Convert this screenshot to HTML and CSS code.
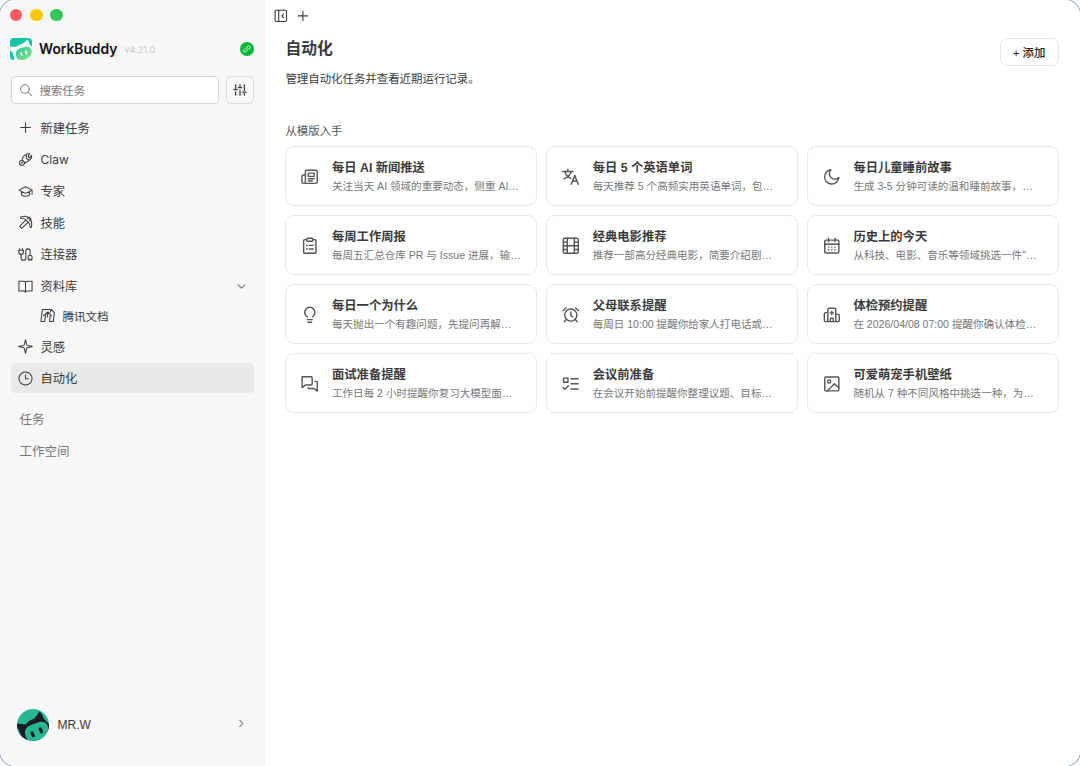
FILE: index.html
```html
<!DOCTYPE html>
<html lang="zh-CN">
<head>
    <meta charset="UTF-8">
    <meta name="viewport" content="width=device-width, initial-scale=1.0">
    <title>WorkBuddy</title>
    <link rel="stylesheet" href="styles.css">
</head>
<body>
<div class="window">
    <aside class="sidebar">
        <div class="lights">
            <span class="light red"></span>
            <span class="light yellow"></span>
            <span class="light green"></span>
        </div>

        <div class="brand">
            <svg class="logo" viewBox="0 0 22 22">
                <defs>
                    <linearGradient id="face" x1="0" y1="0" x2="1" y2="1">
                        <stop offset="0" stop-color="#1fc9a4"/>
                        <stop offset="1" stop-color="#9be07c"/>
                    </linearGradient>
                </defs>
                <rect width="22" height="22" rx="4" fill="#12c8a4"/>
                <path d="M0 8.500 5.500 9Q9 6.500 13 5.500L17.800 1.500 19.500 6 22 9V18Q22 22 18 22H4Q0 22 0 18Z" fill="#f4fffb"/>
                <path d="M0 12 3 15.500 4.500 22H4Q0 22 0 18Z" fill="#12c8a4"/>
                <path d="M5.800 16.500Q5.300 12 10.500 10.200L15.500 8.800Q21 8.300 21.800 13.500 22 18 17 20.700 12 23.500 7.500 21 6 19 5.800 16.500Z" fill="url(#face)"/>
                <path d="m11 15 .7 2M15.800 13.400l.7 2" stroke="#fff" stroke-width="1.700" stroke-linecap="round"/>
            </svg>
            <h1 class="brand-name">WorkBuddy</h1>
            <span class="version">v4.21.0</span>
            <svg class="link-badge" viewBox="0 0 14 14">
                <circle cx="7" cy="7" r="7" fill="#07b53b"/>
                <path d="M5.300 7C3.900 7.200 3.200 8 3.400 9c.4 1.500 3.200 1.500 3.500-.4V5.300c.3-1.900 3.200-1.900 3.600-.3.200 1.100-.6 1.900-1.900 2.100" fill="none" stroke="#fff" stroke-width=".8" stroke-linecap="round"/>
            </svg>
        </div>

        <div class="search-row">
            <div class="search">
                <svg class="icon" viewBox="0 0 16 16"><circle cx="6.800" cy="6.800" r="5"/><path d="m10.500 10.500 4 4"/></svg>
                <span>搜索任务</span>
            </div>
            <button class="filter">
                <svg class="icon" viewBox="0 0 16 16"><path d="M3 2v5M3 10v4M1 7.500h4M8 2v2.500M8 8v6M6 5.200h4M13 2v6.500M13 12v2M11 10.500h4"/></svg>
            </button>
        </div>

        <nav class="nav">
            <a class="nav-item">
                <svg class="icon" viewBox="0 0 16 16"><path d="M8 2.800v10.400M2.800 8h10.400"/></svg>
                <span>新建任务</span>
            </a>
            <a class="nav-item">
                <svg class="icon" viewBox="0 0 16 16"><path d="M4.300 8.500C5 4.500 8 1.700 12.500 1.800L10.800 4.800l1.500 1.400 2.300-2.500C15 8 11.500 9.300 7 12M9 3.200l-.2 3.600 2.500 1.400"/><circle cx="4.200" cy="11.600" r="2.600"/><path d="m3.500 12.300 1.800-1.900"/></svg>
                <span class="latin">Claw</span>
            </a>
            <a class="nav-item">
                <svg class="icon" viewBox="0 0 16 16"><path d="M1 6.500 8 3l7 3.500L8 10ZM3.800 8v3.500c2.300 2 6 2 8.400 0V8M15 6.500v4.800"/></svg>
                <span>专家</span>
            </a>
            <a class="nav-item">
                <svg class="icon" viewBox="0 0 16 16"><path d="M2.800 2.200C6.500 1 10 1.300 12 3.500c2.400 2 3.200 5.500 2.200 9.500l-1.200.2c-.1-2.500-.8-4.400-2-5.700L4 14.300 1.800 12.200 8.500 5.200C7.200 4.200 5.300 3.500 2.800 3.500ZM8.500 5.200l2.500 2.300M10 4l1.700-1.700 2.200 2.200-1.600 1.600"/></svg>
                <span>技能</span>
            </a>
            <a class="nav-item">
                <svg class="icon" viewBox="0 0 16 16"><path d="M1.800 1.500v2M4.800 1.500v2M.8 3.500h5v1.700a2.500 2.500 0 0 1-5 0ZM3.300 7.700v4a2.500 2.500 0 0 0 5 0V4.300a2.300 2.300 0 0 1 4.600 0v4.500M10.800 13v-2a2.100 2.100 0 0 1 4.200 0v2ZM11.800 13v1.500M14 13v1.500"/></svg>
                <span>连接器</span>
            </a>
            <a class="nav-item">
                <svg class="icon" viewBox="0 0 16 16"><path d="M8 3.500Q7.200 2.300 5.500 2.300H1v10.600h5Q7.400 12.900 8 14q.6-1.100 2-1.100h5V2.300h-4.500Q8.800 2.300 8 3.500V14"/></svg>
                <span>资料库</span>
                <svg class="icon chevron" viewBox="0 0 16 16"><path d="m3 5.500 5 5 5-5"/></svg>
            </a>
            <a class="nav-item sub">
                <svg class="icon" viewBox="0 0 16 16"><path d="M5 14.300H1L2.500 1.500h9.300L15.300 5 14.200 14.300H10.200L11 8M5 14.300 5.900 7.500M3.800 8 8.500 4.200 12.300 8.500M8.500 4.200 7.800 9.500M11.800 1.500 11 4.500"/></svg>
                <span>腾讯文档</span>
            </a>
            <a class="nav-item">
                <svg class="icon" viewBox="0 0 16 16"><path d="M8 .8C8.500 1.500 8.600 5 9.500 6.500 11 7.400 14.500 7.500 15.200 8 14.500 8.500 11 8.600 9.500 9.500 8.600 11 8.500 14.500 8 15.200 7.500 14.500 7.400 11 6.500 9.500 5 8.600 1.500 8.500.8 8 1.500 7.500 5 7.400 6.500 6.500 7.400 5 7.500 1.500 8 .8Z"/></svg>
                <span>灵感</span>
            </a>
            <a class="nav-item active">
                <svg class="icon" viewBox="0 0 16 16"><circle cx="8" cy="8" r="7"/><path d="M8 4.200V8.300h3"/></svg>
                <span>自动化</span>
            </a>
        </nav>

        <div class="groups">
            <div class="group">任务</div>
            <div class="group">工作空间</div>
        </div>

        <div class="user">
            <svg class="avatar" viewBox="0 0 32 32">
                <defs><clipPath id="round"><circle cx="16" cy="16" r="16"/></clipPath></defs>
                <g clip-path="url(#round)">
                    <rect width="32" height="32" fill="#27b893"/>
                    <path d="M0 14.500 8.500 15.500Q12 11 17.500 9.500L22.800 2.200Q25.500 5.500 27 10L32 15V21L10 32H6L0 24Z" fill="#1b1b28"/>
                    <path d="M0 18Q4 23 4.500 32H0Z" fill="#27b893"/>
                    <path d="M8 24.500Q7.500 18 14 16L23 12.800Q29.500 12 31 18L32 32H12Q8.500 29 8 24.500Z" fill="#27b893"/>
                    <path d="m15 24 1.300 2.700M23.200 20l1.300 2.700" stroke="#1b1b28" stroke-width="3.200" stroke-linecap="round"/>
                </g>
            </svg>
            <span class="user-name">MR.W</span>
            <svg class="icon chevron" viewBox="0 0 16 16"><path d="m5.500 3.500 4.500 4.500-4.500 4.500"/></svg>
        </div>
    </aside>

    <main class="main">
        <div class="toolbar">
            <svg class="icon" viewBox="0 0 14 14"><rect x="1.100" y="1.300" width="11.600" height="11.400" rx="1"/><path d="M4.800 1.300v11.400M9.700 5.200 8 7l1.700 1.800"/></svg>
            <svg class="icon" viewBox="0 0 14 14"><path d="M7 2.200v9.600M2.200 7h9.600"/></svg>
        </div>

        <header class="header">
            <div>
                <h2 class="title">自动化</h2>
                <p class="subtitle">管理自动化任务并查看近期运行记录。</p>
            </div>
            <button class="add">+ 添加</button>
        </header>

        <h3 class="section-title">从模版入手</h3>
        <div class="cards">
            <div class="card">
                <svg class="icon" viewBox="0 0 20 20"><path d="M5 17.500h11.500a2 2 0 0 0 2-2V4a1.500 1.500 0 0 0-1.500-1.500H6.500A1.500 1.500 0 0 0 5 4v11.500a2 2 0 0 1-4 0V9.500A1.500 1.500 0 0 1 2.500 8H5M8.300 5.800h6.700v3.700H8.300ZM8.300 12.200h6.700M8.300 14.700h4.500"/></svg>
                <div>
                    <div class="card-title">每日 AI 新闻推送</div>
                    <div class="card-desc">关注当天 AI 领域的重要动态，侧重 AI…</div>
                </div>
            </div>
            <div class="card">
                <svg class="icon" viewBox="0 0 20 20"><path d="M1 4h11.500M6.700 1.500V4M3.300 4.300C4.500 8 7 10.500 10 11.800M10.500 4.300C9.300 8 6.500 10.700 2 12.300M10.500 18.500l4-10 4 10M12 15h5"/></svg>
                <div>
                    <div class="card-title">每日 5 个英语单词</div>
                    <div class="card-desc">每天推荐 5 个高频实用英语单词，包…</div>
                </div>
            </div>
            <div class="card">
                <svg class="icon" viewBox="0 0 20 20"><path d="M9 2a5.800 5.800 0 0 0 9 8.800A8.100 8.100 0 1 1 9 2Z"/></svg>
                <div>
                    <div class="card-title">每日儿童睡前故事</div>
                    <div class="card-desc">生成 3-5 分钟可读的温和睡前故事，…</div>
                </div>
            </div>
            <div class="card">
                <svg class="icon" viewBox="0 0 20 20"><path d="M6.500 3H4.300A1.300 1.300 0 0 0 3 4.300v12.900a1.300 1.300 0 0 0 1.300 1.300h11.400a1.300 1.300 0 0 0 1.300-1.300V4.300A1.300 1.300 0 0 0 15.700 3h-2.200"/><rect x="6.500" y="1.500" width="7" height="3.300" rx="1"/><path d="M6.300 9.500h1M9.500 9.500H14M6.300 13.700h1M9.500 13.700H14"/></svg>
                <div>
                    <div class="card-title">每周工作周报</div>
                    <div class="card-desc">每周五汇总仓库 PR 与 Issue 进展，输…</div>
                </div>
            </div>
            <div class="card">
                <svg class="icon" viewBox="0 0 20 20"><rect x="1.500" y="1.500" width="17" height="17" rx="1.500"/><path d="M6 1.500v17M14 1.500v17M1.500 10h17M1.500 5.800H6M1.500 14.200H6M14 5.800h4.500M14 14.200h4.500"/></svg>
                <div>
                    <div class="card-title">经典电影推荐</div>
                    <div class="card-desc">推荐一部高分经典电影，简要介绍剧…</div>
                </div>
            </div>
            <div class="card">
                <svg class="icon" viewBox="0 0 20 20"><rect x="2" y="3.500" width="16" height="14.700" rx="1.300"/><path d="M2 8.300h16M6.300 1.300v4M13.700 1.300v4M6.200 11.500h.4M9.800 11.500h.4M13.400 11.500h.4M6.200 14.700h.4M9.800 14.700h.4M13.400 14.700h.4"/></svg>
                <div>
                    <div class="card-title">历史上的今天</div>
                    <div class="card-desc">从科技、电影、音乐等领域挑选一件"…</div>
                </div>
            </div>
            <div class="card">
                <svg class="icon" viewBox="0 0 20 20"><path d="M7.300 12.500C5.300 11.300 4.300 9.500 4.300 7.200a5.700 5.700 0 0 1 11.400 0c0 2.300-1 4.100-3 5.300M7.300 15.500h5.400M8 18.500h4"/></svg>
                <div>
                    <div class="card-title">每日一个为什么</div>
                    <div class="card-desc">每天抛出一个有趣问题，先提问再解…</div>
                </div>
            </div>
            <div class="card">
                <svg class="icon" viewBox="0 0 20 20"><circle cx="10" cy="10.300" r="6.900"/><path d="M10 6.800v4l2.200 1.500M1.300 5.200l3.300-3M18.700 5.200l-3.300-3M5 15.300l-2.300 2.500M15 15.300l2.300 2.500"/></svg>
                <div>
                    <div class="card-title">父母联系提醒</div>
                    <div class="card-desc">每周日 10:00 提醒你给家人打电话或…</div>
                </div>
            </div>
            <div class="card">
                <svg class="icon" viewBox="0 0 20 20"><path d="M5.500 17.800V4A1.500 1.500 0 0 1 7 2.500h6A1.500 1.500 0 0 1 14.500 4v13.800M5.500 7.500H3A1.500 1.500 0 0 0 1.500 9v7.300A1.500 1.500 0 0 0 3 17.800h14a1.500 1.500 0 0 0 1.500-1.500V11A1.500 1.500 0 0 0 17 9.500h-2.500M8.300 17.800v-2.500a1.700 1.700 0 0 1 3.400 0v2.500M10 5.800v4M8 7.800h4"/></svg>
                <div>
                    <div class="card-title">体检预约提醒</div>
                    <div class="card-desc">在 2026/04/08 07:00 提醒你确认体检…</div>
                </div>
            </div>
            <div class="card">
                <svg class="icon" viewBox="0 0 20 20"><path d="M1.300 2h10.400a1 1 0 0 1 1 1v7.300a1 1 0 0 1-1 1H5L1.300 14.300ZM16 7.300h1.500a1 1 0 0 1 1 1v10L15 15.300H9a1 1 0 0 1-1-1"/></svg>
                <div>
                    <div class="card-title">面试准备提醒</div>
                    <div class="card-desc">工作日每 2 小时提醒你复习大模型面…</div>
                </div>
            </div>
            <div class="card">
                <svg class="icon" viewBox="0 0 20 20"><path d="M1.800 3.500h5v4.800h-5ZM1.300 14.200l2 2 4-4M10.300 4.200h8M10.300 10h8M10.300 16h8"/></svg>
                <div>
                    <div class="card-title">会议前准备</div>
                    <div class="card-desc">在会议开始前提醒你整理议题、目标…</div>
                </div>
            </div>
            <div class="card">
                <svg class="icon" viewBox="0 0 20 20"><rect x="2" y="2.300" width="16" height="15.700" rx="1.300"/><circle cx="7" cy="7.300" r="1.800"/><path d="m5 18 8-8 5 4.500"/></svg>
                <div>
                    <div class="card-title">可爱萌宠手机壁纸</div>
                    <div class="card-desc">随机从 7 种不同风格中挑选一种，为…</div>
                </div>
            </div>
        </div>
    </main>
</div>
</body>
</html>
```
FILE: styles.css
```css
* {
    box-sizing: border-box;
    margin: 0;
    padding: 0;
}
html, body {
    height: 100%;
}
body {
    font-family: "Liberation Sans", "Noto Sans CJK SC", sans-serif;
    font-size: 12.3px;
    color: #3a3a3a;
    background: #fff;
    overflow: hidden;
}
button {
    font: inherit;
    color: inherit;
}
.window {
    display: flex;
    height: 100%;
    border-radius: 15px;
    overflow: hidden;
    box-shadow: 0 0 0 1px #8a9fc0;
}
.icon {
    flex: none;
    width: 15px;
    height: 15px;
    fill: none;
    stroke: currentColor;
    stroke-width: 1.1;
    stroke-linecap: round;
    stroke-linejoin: round;
}

/* sidebar */
.sidebar {
    display: flex;
    flex-direction: column;
    flex: none;
    width: 265px;
    padding: 8.5px 10px 25px 10.5px;
    background: #f7f7f7;
    border-right: 1px solid #f2f2f2;
}
.lights {
    display: flex;
    gap: 7.5px;
    height: 13px;
    margin-left: -1px;
}
.light {
    width: 12.8px;
    height: 12.8px;
    border-radius: 50%;
}
.red {
    background: #ff5a5f;
}
.yellow {
    background: #fbc700;
}
.green {
    background: #35c759;
}
.brand {
    display: flex;
    align-items: center;
    height: 22px;
    margin-top: 16.5px;
    margin-left: -.5px;
}
.logo {
    width: 22px;
    height: 22px;
}
.brand-name {
    margin-left: 7px;
    font-family: Inter, sans-serif;
    font-size: 13.8px;
    font-weight: 600;
    line-height: 22px;
    color: #111;
}
.version {
    margin-left: 7px;
    font-family: Inter, sans-serif;
    font-size: 9.2px;
    color: #c8c8c8;
}
.link-badge {
    width: 14px;
    height: 14px;
    margin-left: auto;
}
.search-row {
    display: flex;
    gap: 7px;
    margin-top: 16px;
}
.search {
    display: flex;
    align-items: center;
    gap: 7px;
    width: 208.5px;
    height: 28px;
    padding-left: 7px;
    background: #fff;
    border: 1px solid #d4d4d4;
    border-radius: 5px;
    font-size: 11.45px;
    color: #777;
}
.search .icon {
    width: 14px;
    height: 14px;
}
.filter {
    display: flex;
    align-items: center;
    justify-content: center;
    width: 28px;
    height: 28px;
    background: #f7f7f7;
    border: 1px solid #dadada;
    border-radius: 5px;
}
.filter .icon {
    width: 14px;
    height: 14px;
    stroke-width: 1.4;
}
.nav {
    display: flex;
    flex-direction: column;
    gap: 1.7px;
    margin-top: 8.7px;
}
.nav-item {
    display: flex;
    align-items: center;
    gap: 7.5px;
    width: 243.5px;
    height: 30px;
    padding: 0 7.5px;
    border-radius: 4px;
}
.nav-item.sub {
    height: 27px;
    padding-left: 29.5px;
    padding-bottom: 1px;
    font-size: 11.5px;
}
.nav-item.active {
    background: #e9e9e9;
}
.latin {
    font-family: Inter, sans-serif;
    font-size: 12px;
}
.chevron {
    width: 11px;
    height: 11px;
    margin-left: auto;
    color: #777;
    stroke-width: 1.5;
}
.groups {
    margin-top: 12px;
    padding-left: 9px;
    color: #777;
}
.group {
    height: 31.7px;
    line-height: 31.7px;
    font-size: 12.5px;
}
.user {
    display: flex;
    align-items: center;
    gap: 8.5px;
    margin-top: auto;
    padding: 0 7.5px 0 6.5px;
}
.user-name {
    font-size: 12px;
}
.user .chevron {
    margin-bottom: 3px;
}
.avatar {
    width: 32px;
    height: 32px;
}

/* main */
.main {
    flex: 1;
    padding: 8.5px 21.5px 0 20.4px;
    background: #fff;
}
.toolbar {
    display: flex;
    gap: 7.5px;
    margin-left: -11px;
}
.toolbar .icon {
    width: 13.8px;
    height: 13.8px;
}
.header {
    display: flex;
    justify-content: space-between;
    align-items: flex-start;
    margin-top: 15.5px;
}
.title {
    font-size: 15.8px;
    font-weight: 600;
    line-height: 22px;
}
.subtitle {
    margin-top: 10.3px;
    font-size: 11.43px;
    line-height: 18px;
}
.add {
    width: 59px;
    height: 28px;
    background: #fff;
    border: 1px solid #e8e8e8;
    border-radius: 7px;
    font-size: 11.43px;
    font-weight: 500;
    color: #222;
}
.section-title {
    margin-top: 34px;
    font-size: 11.43px;
    font-weight: 400;
    line-height: 18px;
    color: #555;
}
.cards {
    display: grid;
    grid-template-columns: repeat(3, 1fr);
    gap: 8.8px 9px;
    margin-top: 5.8px;
}
.card {
    display: flex;
    align-items: center;
    gap: 13px;
    height: 60.3px;
    padding: 0 15px;
    border: 1px solid #e9e9e9;
    border-radius: 9px;
    white-space: nowrap;
}
.card .icon {
    width: 17.6px;
    height: 17.6px;
    margin-top: 1px;
    color: #555;
    stroke-width: 1.6;
}
.card-title {
    padding-top: 1px;
    font-size: 12.3px;
    font-weight: 600;
    line-height: 19px;
}
.card-desc {
    font-size: 10.56px;
    line-height: 17px;
    color: #777;
}
```
